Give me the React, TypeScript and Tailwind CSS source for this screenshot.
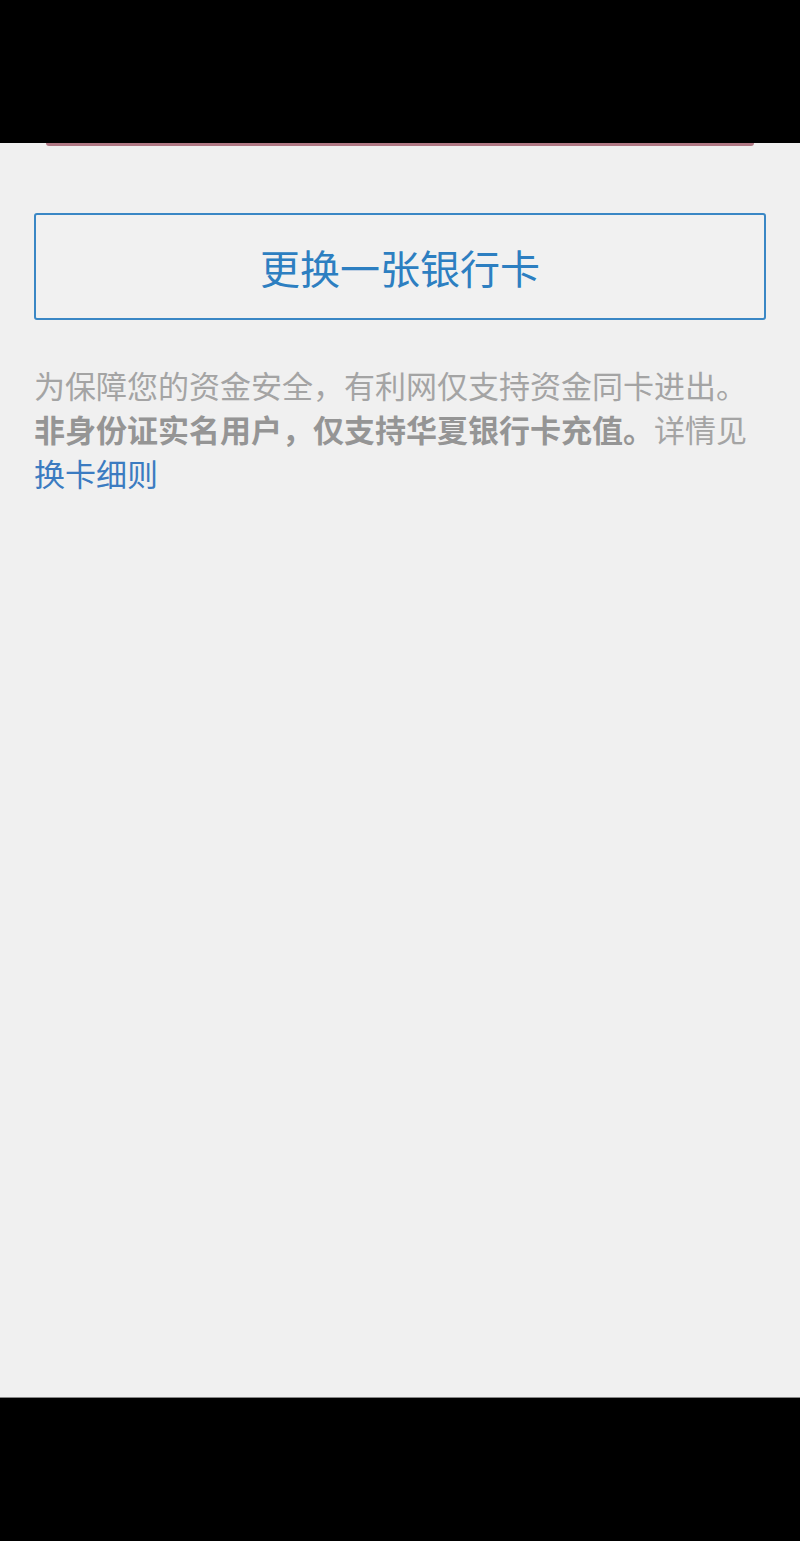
export default function App() {
  return (
    <div
      className="w-[800px] h-[1541px] flex flex-col bg-black"
      style={{ fontFamily: '"Noto Sans CJK SC", "Noto Sans", sans-serif' }}
    >
      <div className="h-[143px] bg-black shrink-0" />
      <div className="flex-1 bg-[#f0f0f0] flex flex-col px-[34px]">
        {/* bottom edge of the card above, cut off by the top bar */}
        <div className="mx-[12px] h-[3px] bg-[#b07884] rounded-b-[6px]" />

        <button className="mt-[67px] h-[107px] w-full border-2 border-[#3a87c5] rounded-[3px] bg-[#f1f1f1] text-[40px] leading-none text-[#2d7fc1] flex items-center justify-center">
          更换一张银行卡
        </button>

        <p className="mt-[43px] text-[31px] leading-[44px] text-[#a4a4a4]">
          为保障您的资金安全，有利网仅支持资金同卡进出。
          <span className="font-bold text-[#959595]">
            非身份证实名用户，仅支持华夏银行卡充值。
          </span>
          详情见
          <span className="text-[#3b7bc1]">换卡细则</span>
        </p>
      </div>
      <div className="h-[144px] bg-black shrink-0 border-t border-[#888]" />
    </div>
  );
}
